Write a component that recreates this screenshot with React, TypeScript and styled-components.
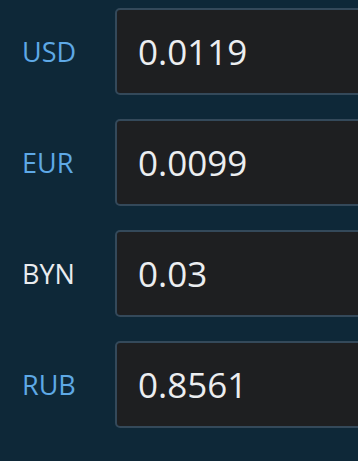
import React from "react";
import styled, { createGlobalStyle } from "styled-components";

const GlobalStyle = createGlobalStyle`
  html, body {
    margin: 0;
    background: #0e2838;
  }
  body {
    padding: 8px 0 0 0;
    font-family: "Open Sans", "Noto Sans", sans-serif;
  }
`;

const rates = [
  { code: "USD", value: "0.0119", active: true },
  { code: "EUR", value: "0.0099", active: true },
  { code: "BYN", value: "0.03", active: false },
  { code: "RUB", value: "0.8561", active: true },
];

export default function App() {
  return (
    <>
      <GlobalStyle />
      <List>
        {rates.map((r) => (
          <Row key={r.code}>
            <Code active={r.active}>{r.code}</Code>
            <Field type="text" defaultValue={r.value} />
          </Row>
        ))}
      </List>
    </>
  );
}

const List = styled.div`
  display: flex;
  flex-direction: column;
  gap: 24px;
  overflow: hidden;
`;

const Row = styled.div`
  display: flex;
  align-items: center;
  height: 87px;
  margin-right: -12px;
`;

const Code = styled.span<{ active: boolean }>`
  flex: 0 0 93px;
  padding-left: 22px;
  font-size: 27px;
  color: ${(p) => (p.active ? "#5ea9e6" : "#e9ecef")};
`;

const Field = styled.input`
  box-sizing: border-box;
  flex: 1;
  min-width: 0;
  height: 87px;
  padding: 0 0 0 21px;
  background: #1e1f21;
  border: 2px solid #34495a;
  border-radius: 5px;
  color: #eceef0;
  font-family: "Open Sans", "Noto Sans", sans-serif;
  font-size: 35px;
  outline: none;
`;
